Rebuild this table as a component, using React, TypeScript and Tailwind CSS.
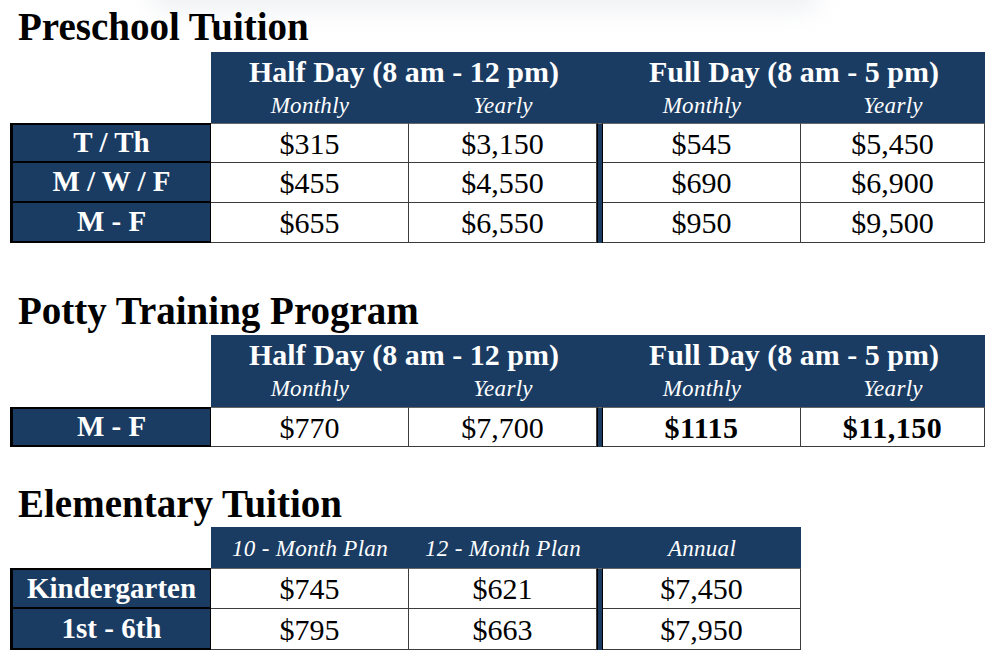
import React from "react";

const NAVY = "bg-[#1a3c63]";

interface PriceRow {
  label: string;
  values: string[];
  boldRight?: boolean;
}

const preschoolRows: PriceRow[] = [
  { label: "T / Th", values: ["$315", "$3,150", "$545", "$5,450"] },
  { label: "M / W / F", values: ["$455", "$4,550", "$690", "$6,900"] },
  { label: "M - F", values: ["$655", "$6,550", "$950", "$9,500"] },
];

const pottyRows: PriceRow[] = [
  { label: "M - F", values: ["$770", "$7,700", "$1115", "$11,150"], boldRight: true },
];

const elementaryRows: PriceRow[] = [
  { label: "Kindergarten", values: ["$745", "$621", "$7,450"] },
  { label: "1st - 6th", values: ["$795", "$663", "$7,950"] },
];

const SectionTitle: React.FC<{ children: React.ReactNode }> = ({ children }) => (
  <h2 className="ml-[18px] h-[39px] text-[39px] leading-[39px] font-bold text-black whitespace-nowrap">
    {children}
  </h2>
);

const LabelCell: React.FC<{ label: string; first: boolean }> = ({ label, first }) => (
  <div
    className={`${NAVY} flex items-center justify-center border-l-[3px] border-r border-b-2 border-black text-white text-[29px] font-bold ${
      first ? "border-t-2" : ""
    }`}>
    {label}
  </div>
);

const ValueCell: React.FC<{ value: string; first: boolean; bold?: boolean }> = ({
  value,
  first,
  bold,
}) => (
  <div
    className={`bg-white flex items-center justify-center border-r border-b border-[#3c3c3c] text-black ${
      bold ? "font-bold text-[30px] tracking-[0.5px]" : "text-[30px]"
    } ${first ? "border-t border-t-[#666]" : ""}`}>
    {value}
  </div>
);

const Separator: React.FC<{ first: boolean }> = ({ first }) => (
  <div className={`${NAVY} border-x border-black ${first ? "border-t border-t-[#666]" : ""}`} />
);

const subHead = "flex justify-center pt-[4px] text-[23px] leading-[23px] italic tracking-[0.3px]";

const DayTable: React.FC<{ rows: PriceRow[]; rowsClass: string }> = ({ rows, rowsClass }) => (
  <div className={`ml-[10px] grid grid-cols-[201px_198px_188px_6px_198px_184px] ${rowsClass} w-[975px]`}>
    <div className="bg-white" />
    <div className={`col-span-5 ${NAVY} text-white grid grid-cols-[198px_188px_6px_198px_184px] grid-rows-[38px_1fr]`}>
      <div className="col-span-2 flex justify-center pt-[5px] text-[30px] leading-[30px] font-bold whitespace-nowrap">
        Half Day (8 am - 12 pm)
      </div>
      <div />
      <div className="col-span-2 flex justify-center pt-[5px] text-[30px] leading-[30px] font-bold whitespace-nowrap">
        Full Day (8 am - 5 pm)
      </div>
      <div className={subHead}>Monthly</div>
      <div className={subHead}>Yearly</div>
      <div />
      <div className={subHead}>Monthly</div>
      <div className={subHead}>Yearly</div>
    </div>
    {rows.map((row, i) => (
      <React.Fragment key={row.label}>
        <LabelCell label={row.label} first={i === 0} />
        <ValueCell value={row.values[0]} first={i === 0} />
        <ValueCell value={row.values[1]} first={i === 0} />
        <Separator first={i === 0} />
        <ValueCell value={row.values[2]} first={i === 0} bold={row.boldRight} />
        <ValueCell value={row.values[3]} first={i === 0} bold={row.boldRight} />
      </React.Fragment>
    ))}
  </div>
);

const ElementaryTable: React.FC<{ rows: PriceRow[] }> = ({ rows }) => (
  <div className="ml-[10px] grid grid-cols-[201px_198px_188px_6px_198px] grid-rows-[41px_41px_41px] w-[791px]">
    <div className="bg-white" />
    <div className={`col-span-4 ${NAVY} text-white grid grid-cols-[198px_188px_6px_198px]`}>
      <div className="flex items-center justify-center pt-[4px] text-[23px] italic tracking-[0.3px] whitespace-nowrap">
        10 - Month Plan
      </div>
      <div className="flex items-center justify-center pt-[4px] text-[23px] italic tracking-[0.3px] whitespace-nowrap">
        12 - Month Plan
      </div>
      <div />
      <div className="flex items-center justify-center pt-[4px] text-[23px] italic tracking-[0.3px]">Annual</div>
    </div>
    {rows.map((row, i) => (
      <React.Fragment key={row.label}>
        <LabelCell label={row.label} first={i === 0} />
        <ValueCell value={row.values[0]} first={i === 0} />
        <ValueCell value={row.values[1]} first={i === 0} />
        <Separator first={i === 0} />
        <ValueCell value={row.values[2]} first={i === 0} />
      </React.Fragment>
    ))}
  </div>
);

export default function App() {
  return (
    <div
      className="relative w-[997px] h-[657px] overflow-hidden bg-white pt-[7px]"
      style={{ fontFamily: '"Liberation Serif", "Times New Roman", serif' }}>
      {/* faint shadow from the page above */}
      <div className="absolute left-[150px] top-[-22px] w-[670px] h-[32px] rounded-full bg-[#eef0f3] blur-md" />

      <div className="relative">
        <SectionTitle>Preschool Tuition</SectionTitle>
        <div className="mt-[6px]">
          <DayTable rows={preschoolRows} rowsClass="grid-rows-[71px_40px_40px_40px]" />
        </div>

        <div className="mt-[48px]">
          <SectionTitle>Potty Training Program</SectionTitle>
        </div>
        <div className="mt-[5px]">
          <DayTable rows={pottyRows} rowsClass="grid-rows-[72px_40px]" />
        </div>

        <div className="mt-[37px]">
          <SectionTitle>Elementary Tuition</SectionTitle>
        </div>
        <div className="mt-[4px]">
          <ElementaryTable rows={elementaryRows} />
        </div>
      </div>
    </div>
  );
}
